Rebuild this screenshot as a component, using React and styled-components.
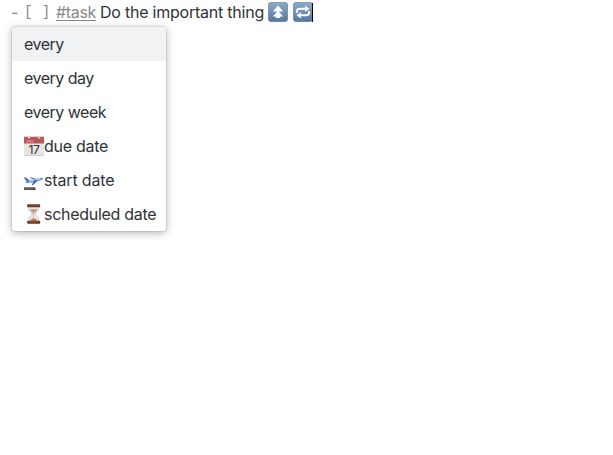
import React from "react";
import styled, { createGlobalStyle } from "styled-components";

const GlobalStyle = createGlobalStyle`
  body {
    margin: 0;
    background: #fff;
    color: #2e3338;
    font: 16px/24px Inter, sans-serif;
    letter-spacing: -0.32px;
  }
`;

const Editor = styled.main`
  box-sizing: border-box;
  min-height: 100vh;
  padding: 0 12px;
`;

const Line = styled.div`
  display: flex;
  align-items: center;
  height: 24px;
  white-space: pre;
`;

const Marker = styled.span`
  width: ${(p) => p.$width}px;
  color: #888;
  font-family: ${(p) => (p.$mono ? '"Liberation Mono", monospace' : "inherit")};
  font-size: ${(p) => (p.$mono ? 14.5 : 16)}px;
  letter-spacing: 0;
`;

const Dash = styled(Marker)`
  margin-left: -1px;
  margin-right: 1px;
`;

const Tag = styled.span`
  width: 40px;
  margin-right: 4px;
  color: #888;
  text-decoration: underline;
  text-underline-offset: 2px;
  text-decoration-thickness: 1px;
`;

const TaskText = styled.span`
  width: 168px;
  letter-spacing: -0.23px;
`;

const Emoji = styled.svg`
  flex: none;
  display: block;
  width: 20px;
  height: 20px;
  margin-right: ${(p) => p.$gap || 0}px;
`;

const Caret = styled.span`
  width: 1px;
  height: 19px;
  margin-left: -1px;
  background: #000;
`;

const Menu = styled.ul`
  width: 154px;
  margin: 3px 0 0;
  padding: 0;
  list-style: none;
  overflow: hidden;
  background: #fff;
  border-radius: 3px;
  box-shadow: 0 0 0 1px rgba(0, 0, 0, 0.07), 0 2px 8px rgba(0, 0, 0, 0.3);
`;

const Suggestion = styled.li`
  display: flex;
  align-items: center;
  height: 34px;
  box-sizing: border-box;
  padding: 0 0 0 12px;
  white-space: nowrap;
  background: ${(p) => (p.$active ? "#f1f2f4" : "transparent")};
`;

const Label = styled.span`
  padding-bottom: 1px;
  letter-spacing: ${(p) => p.$spacing}px;
`;

function ButtonFace({ id }) {
  return (
    <>
      <defs>
        <linearGradient id={id} x2="0" y2="1">
          <stop stopColor="#8baac6" />
          <stop offset="1" stopColor="#54789f" />
        </linearGradient>
      </defs>
      <rect x=".3" y=".3" width="19.4" height="19.4" rx="3.3" fill={`url(#${id})`} stroke="#587898" strokeWidth=".6" />
    </>
  );
}

function HighPriority() {
  return (
    <Emoji viewBox="0 0 20 20" $gap={5}>
      <ButtonFace id="face-up" />
      <path d="m10 3.600 5.200 6H4.800ZM10 8.800l5.200 5.600h-3V16H7.800v-1.600h-3Z" fill="#fff" />
    </Emoji>
  );
}

function Recurring() {
  return (
    <Emoji viewBox="0 0 20 20">
      <ButtonFace id="face-repeat" />
      <g fill="none" stroke="#fff" strokeWidth="2">
        <path d="M3.800 11V9.600Q3.800 6.800 6.800 6.800H13" />
        <path d="M16.200 9v1.400q0 2.800-3 2.800H7" />
      </g>
      <path d="m12 3.600 4.600 3.200L12 10ZM8 10l-4.600 3.200L8 16.400Z" fill="#fff" />
    </Emoji>
  );
}

function Calendar() {
  return (
    <Emoji viewBox="0 0 20 20">
      <path d="M0 .8h20V20H0Z" fill="#e5e5e4" />
      <path d="M0 .8h20v6.600H0Z" fill="#b95758" />
      <path d="M0 19.500h20" stroke="#d0d0d0" />
      <path d="M3.500 4v2q-1 .8-1.500 0M5 4v2h1.500V4M8 4v2h1.500" fill="none" stroke="#e4aaaa" strokeWidth=".7" />
      <g fill="#eee" stroke="#b99" strokeWidth=".4">
        <circle cx="5" cy="1.500" r="1.100" />
        <circle cx="15" cy="1.500" r="1.100" />
      </g>
      <text x="9.900" y="17.800" textAnchor="middle" fontFamily="Inter, sans-serif" fontSize="12.300" letterSpacing="-.5" fill="#303030">17</text>
    </Emoji>
  );
}

function Departure() {
  return (
    <Emoji viewBox="0 0 20 20">
      <path d="m0 7.700 1.800-.2 3.400 2.600 6-1.300q5-1.700 8.300-.8-.2 2-3.500 2.800l-9 2-4.500-.6Z" fill="#6ea0e3" />
      <path d="m5 10.300 7-1.500q4-1.200 7-.6-1 1.100-5 1.900l-8 1.500Z" fill="#b9d4f5" />
      <path d="m5.500 7.500 1.500-.2 5 1.600-2 .7Z" fill="#4d72a4" />
      <path d="m10.500 10.600 3.500-.7-5 5-1.500.3Z" fill="#315989" />
      <path d="m0 7.700 1.500-.1 3.500 3-1.500.8Z" fill="#356baf" />
      <path d="m16 8.200 1.800-.2 1 .6-2 .4Z" fill="#42678f" />
      <path d="m1 12.300 3-.6 1 .8-2 .5Z" fill="#4b79b8" />
      <path d="M0 17.200h11l1 2.800H0Z" fill="#55514f" />
      <path d="M1 18.700h9" stroke="#999" strokeWidth=".5" strokeDasharray="2 1" />
    </Emoji>
  );
}

function Hourglass() {
  return (
    <Emoji viewBox="0.3 0 20 20">
      <path d="M5 2.500h10v2c0 3-3.600 4-3.600 5.500S15 13 15 16v2H5v-2c0-3 3.600-4.500 3.600-6S5 7.500 5 4.500Z" fill="#e8eaec" stroke="#a9acae" strokeWidth=".6" />
      <path d="M6.300 5.200h7.400c-.5 1.800-2.700 2.700-3.700 4.300-1-1.600-3.200-2.500-3.700-4.300Z" fill="#c49474" />
      <path d="M9.800 8.500h.4v5.700q2.500.8 3.500 2.800H6.300q1-2 3.500-2.800Z" fill="#bd8054" />
      <rect x="3.500" y=".2" width="13" height="3" rx=".8" fill="#6b3a25" />
      <rect x="3.500" y="16.800" width="13" height="3" rx=".8" fill="#6b3a25" />
      <path d="M5 1h9M5 17.600h9" stroke="#a77455" strokeWidth=".5" />
    </Emoji>
  );
}

const suggestions = [
  { label: "every", spacing: -0.5 },
  { label: "every day", spacing: -0.5 },
  { label: "every week", spacing: -0.5 },
  { label: "due date", icon: Calendar, spacing: -0.29 },
  { label: "start date", icon: Departure, spacing: -0.16 },
  { label: "scheduled date", icon: Hourglass, spacing: -0.29 },
];

export default function App() {
  return (
    <Editor>
      <GlobalStyle />
      <Line>
        <Dash $width={12}>-</Dash>
        <Marker $mono $width={32}>[ ]</Marker>
        <Tag>#task</Tag>
        <TaskText>Do the important thing</TaskText>
        <HighPriority />
        <Recurring />
        <Caret />
      </Line>
      <Menu>
        {suggestions.map(({ label, icon: Icon, spacing }, index) => (
          <Suggestion key={label} $active={index === 0}>
            {Icon && <Icon />}
            <Label $spacing={spacing}>{label}</Label>
          </Suggestion>
        ))}
      </Menu>
    </Editor>
  );
}
